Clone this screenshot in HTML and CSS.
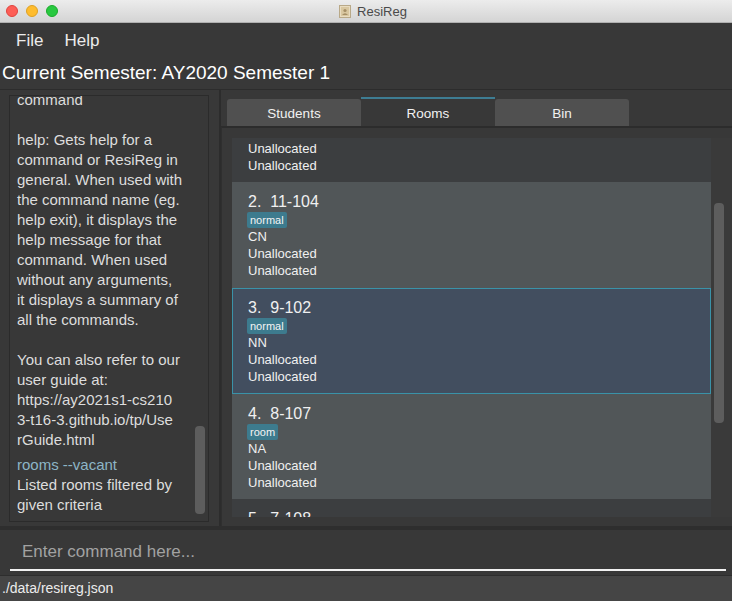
FILE: index.html
```html
<!DOCTYPE html>
<html>
<head>
<meta charset="utf-8">
<title>ResiReg</title>
<link rel="stylesheet" href="styles.css">
</head>
<body>
<div class="window">
  <div class="titlebar">
    <div class="lights">
      <span class="light red"></span>
      <span class="light yellow"></span>
      <span class="light green"></span>
    </div>
    <div class="title">
      <svg class="appicon" width="12" height="13" viewBox="0 0 12 13"><rect x="0.5" y="0.5" width="11" height="12" fill="#e9dcc0" stroke="#b9a988"/><rect x="2" y="2" width="8" height="9" fill="#d9c7a0"/><circle cx="6" cy="5.5" r="1.6" fill="#a58f66"/><path d="M3 10 Q6 6.5 9 10 Z" fill="#a58f66"/></svg>
      <span>ResiReg</span>
    </div>
  </div>

  <div class="menubar">
    <span class="menu">File</span>
    <span class="menu">Help</span>
  </div>

  <div class="semester">Current Semester: AY2020 Semester 1</div>

  <div class="main">
    <div class="left">
      <div class="resultbox">
        <div class="resultscroll">
          <div class="result">
            <div class="line">command</div>
            <div class="line">&nbsp;</div>
            <div class="line">help: Gets help for a</div>
            <div class="line">command or ResiReg in</div>
            <div class="line">general. When used with</div>
            <div class="line">the command name (eg.</div>
            <div class="line">help exit), it displays the</div>
            <div class="line">help message for that</div>
            <div class="line">command. When used</div>
            <div class="line">without any arguments,</div>
            <div class="line">it displays a summary of</div>
            <div class="line">all the commands.</div>
            <div class="line">&nbsp;</div>
            <div class="line">You can also refer to our</div>
            <div class="line">user guide at:</div>
            <div class="line">https://ay2021s1-cs210</div>
            <div class="line">3-t16-3.github.io/tp/Use</div>
            <div class="line">rGuide.html</div>
          </div>
          <div class="result">
            <div class="line cmdecho">rooms --vacant</div>
            <div class="line">Listed rooms filtered by</div>
            <div class="line">given criteria</div>
          </div>
        </div>
        <div class="vscroll left-thumb"></div>
      </div>
    </div>

    <div class="right">
      <div class="tabs">
        <div class="tab">Students</div>
        <div class="tab active">Rooms</div>
        <div class="tab">Bin</div>
      </div>
      <div class="tabcontent">
        <div class="list">
          <div class="cards">
            <div class="card odd">
              <div class="card-title">1.&nbsp;&nbsp;10-101</div>
              <div class="tags"><span class="tag">normal</span></div>
              <div class="card-line">CN</div>
              <div class="card-line">Unallocated</div>
              <div class="card-line">Unallocated</div>
            </div>
            <div class="card even">
              <div class="card-title">2.&nbsp;&nbsp;11-104</div>
              <div class="tags"><span class="tag">normal</span></div>
              <div class="card-line">CN</div>
              <div class="card-line">Unallocated</div>
              <div class="card-line">Unallocated</div>
            </div>
            <div class="card selected">
              <div class="card-title">3.&nbsp;&nbsp;9-102</div>
              <div class="tags"><span class="tag">normal</span></div>
              <div class="card-line">NN</div>
              <div class="card-line">Unallocated</div>
              <div class="card-line">Unallocated</div>
            </div>
            <div class="card even">
              <div class="card-title">4.&nbsp;&nbsp;8-107</div>
              <div class="tags"><span class="tag">room</span></div>
              <div class="card-line">NA</div>
              <div class="card-line">Unallocated</div>
              <div class="card-line">Unallocated</div>
            </div>
            <div class="card odd">
              <div class="card-title">5.&nbsp;&nbsp;7-108</div>
              <div class="tags"><span class="tag">normal</span></div>
              <div class="card-line">NN</div>
              <div class="card-line">Unallocated</div>
              <div class="card-line">Unallocated</div>
            </div>
          </div>
        </div>
        <div class="listscroll">
          <div class="vscroll list-thumb"></div>
        </div>
      </div>
    </div>
  </div>

  <div class="commandbox">
    <div class="commandfield">
      <span class="placeholder">Enter command here...</span>
    </div>
  </div>

  <div class="statusbar">./data/resireg.json</div>
</div>
</body>
</html>
```

FILE: styles.css
```css
* { box-sizing: border-box; }

html, body {
  margin: 0;
  padding: 0;
  width: 732px;
  height: 601px;
  overflow: hidden;
  background: #383838;
}

.window {
  width: 732px;
  height: 601px;
  display: flex;
  flex-direction: column;
  font-family: "Liberation Sans", Arial, sans-serif;
  color: #e8e8e8;
  background: #383838;
}

/* Title bar */
.titlebar {
  height: 23px;
  flex: none;
  background: linear-gradient(#ececec, #d4d4d4);
  border-bottom: 1px solid #b0b0b0;
  position: relative;
  display: flex;
  align-items: center;
  justify-content: center;
}
.lights {
  position: absolute;
  left: 6px;
  top: 5px;
  display: flex;
  gap: 8px;
}
.light {
  width: 12px;
  height: 12px;
  border-radius: 50%;
  display: block;
}
.red { background: #fd5e56; border: 1px solid #e0443e; }
.yellow { background: #febc2e; border: 1px solid #dea123; }
.green { background: #28c840; border: 1px solid #1aab29; }
.title {
  display: flex;
  align-items: center;
  gap: 6px;
  font-size: 13px;
  color: #4a4a4a;
  margin-left: 14px;
}
.appicon { display: block; }

/* Menu bar */
.menubar {
  height: 35px;
  flex: none;
  display: flex;
  align-items: center;
  padding-left: 16px;
  gap: 21px;
  font-size: 17px;
  color: #ececec;
}

/* Semester */
.semester {
  height: 32px;
  flex: none;
  padding-left: 2px;
  font-size: 19px;
  color: #ffffff;
  line-height: 30px;
  border-bottom: 1px solid #2c2c2c;
}

/* Main */
.main {
  flex: 1;
  display: flex;
  min-height: 0;
  border-bottom: 4px solid #2e2e2e;
}

.left {
  width: 221px;
  flex: none;
  padding: 5px 10px 4px 9px;
  border-right: 2px solid #2c2c2c;
  display: flex;
}
.resultbox {
  flex: 1;
  border: 1px solid #2b2b2b;
  position: relative;
  overflow: hidden;
}
.resultscroll {
  margin-top: -6px;
  padding-left: 7px;
  font-size: 15px;
  line-height: 20px;
  color: #dddddd;
}
.result { margin-bottom: 5px; }
.line { white-space: nowrap; }
.cmdecho { color: #8db5c6; }

.vscroll {
  position: absolute;
  background: #5d5d5d;
  border-radius: 4px;
  width: 10px;
}
.left-thumb {
  right: 3px;
  top: 330px;
  height: 88px;
}

.right {
  flex: 1;
  display: flex;
  flex-direction: column;
  padding-top: 9px;
  min-width: 0;
}
.tabs {
  display: flex;
  padding-left: 6px;
  height: 27px;
  flex: none;
}
.tab {
  width: 134px;
  height: 27px;
  background: #505050;
  border-radius: 3px 3px 0 0;
  font-size: 13.5px;
  color: #f2f2f2;
  display: flex;
  align-items: center;
  justify-content: center;
  padding-top: 1px;
}
.tab.active {
  background: #383838;
  border-top: 2px solid #3e7d93;
  border-radius: 0;
  margin-top: -2px;
  height: 29px;
}
.tabcontent {
  flex: 1;
  display: flex;
  border-top: 2px solid #2c2c2c;
  border-left: 1px solid #2f2f2f;
  padding: 10px 0 9px 10px;
  min-height: 0;
}
.list {
  width: 479px;
  flex: none;
  overflow: hidden;
  background: #3c3e40;
}
.cards { margin-top: -61px; }
.card {
  height: 105px;
  padding: 10px 16px 0 16px;
  color: #f0f0f0;
}
.card:nth-child(2) { height: 106px; }
.card.odd { background: #3c3e40; }
.card.even { background: #515658; }
.card.selected {
  background: #424e5f;
  border: 1px solid #3a92a8;
  padding: 9px 15px 0 15px;
  height: 106px;
}
.card-title {
  font-size: 16px;
  line-height: 20px;
  white-space: pre;
}
.tags {
  height: 16px;
  display: flex;
  align-items: center;
}
.tag {
  background: #3d7b8e;
  color: #f4f4f4;
  font-size: 11px;
  line-height: 16px;
  padding: 0 3px;
  border-radius: 2px;
  margin-left: -1px;
}
.card-line {
  font-size: 13px;
  line-height: 17px;
}

.listscroll {
  flex: 1;
  position: relative;
  background: #3a3a3a;
}
.list-thumb {
  left: 3px;
  top: 65px;
  height: 220px;
}

/* Command box */
.commandbox {
  height: 45px;
  flex: none;
  padding: 0 6px 0 10px;
  display: flex;
}
.commandfield {
  flex: 1;
  border-bottom: 2px solid #f2f2f2;
  display: flex;
  align-items: center;
  padding-left: 12px;
  padding-top: 4px;
  margin-bottom: 4px;
}
.placeholder {
  font-size: 17px;
  color: #a2a2a2;
}

/* Status bar */
.statusbar {
  height: 26px;
  flex: none;
  background: #454545;
  border-top: 1px solid #2e2e2e;
  font-size: 14px;
  color: #ececec;
  padding-left: 2px;
  line-height: 25px;
}
```
